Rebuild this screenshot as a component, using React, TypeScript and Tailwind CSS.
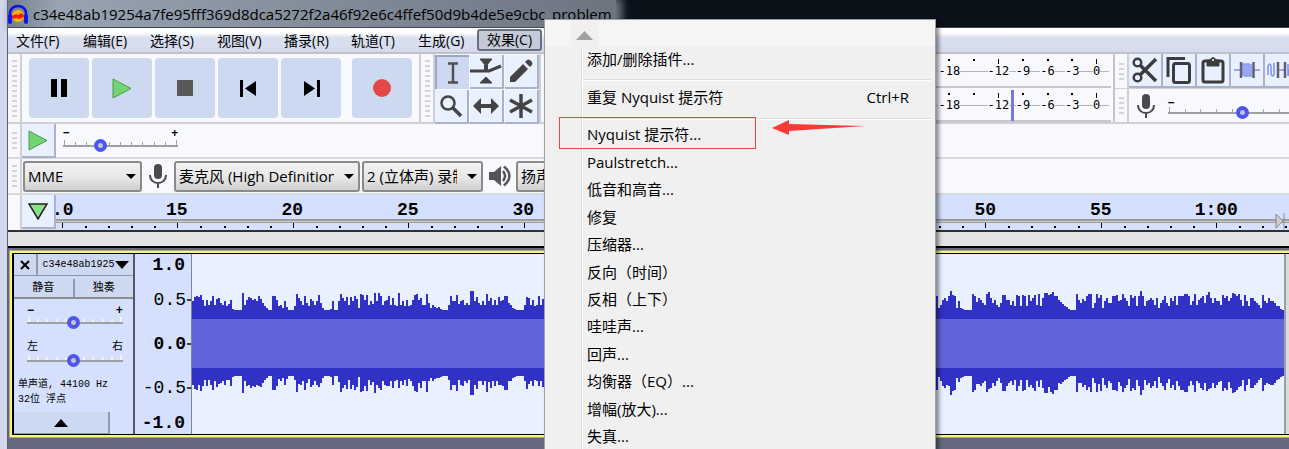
import React from "react";

const UI = "font-['Open_Sans','Noto_Sans_CJK_SC',sans-serif]";
const MONO = "font-['Liberation_Mono','Noto_Sans_CJK_SC',monospace]";

const menus = ["文件(F)", "编辑(E)", "选择(S)", "视图(V)", "播录(R)", "轨道(T)", "生成(G)"];
const effects = [
  "Nyquist 提示符...",
  "Paulstretch...",
  "低音和高音...",
  "修复",
  "压缩器...",
  "反向（时间）",
  "反相（上下）",
  "哇哇声...",
  "回声...",
  "均衡器（EQ）...",
  "增幅(放大)...",
  "失真...",
];

// Peak heights of the recording, one base-36 digit for every two pixels.
const opening =
  "9dedfa4a59e5bc75946a10000h5adcab9eb74200eea452930004gc95e74b959f7200019009gc9d5d9eb2gfaf596h9he59ae5c54h594a45afgac55g7253231000" +
  "5e99f69a575jj9d7595g9c5a5d9aee752100005dc5a45e5b";
const closing =
  "e25ac9ejfe29210000ge8ca75gic7a537ffaa594fe4fe4f9cf5g4chhfgieea86431000ga7b9egg27gcf29c77eef9agc94fce4eje49aca5c27ae74c9e5eeegge59g5ace7fic7c995fce9chgega4f94cc9752f97c9974410";
const peaks = (opening + opening + opening.slice(0, 20) + closing).split("").map((c) => parseInt(c, 36));

const wave = (() => {
  const n = peaks.length;
  const w = 1092 / n;
  const top: string[] = [];
  const bottom: string[] = [];
  peaks.forEach((p, i) => {
    const x = (i * w).toFixed(1);
    const x2 = ((i + 1) * w).toFixed(1);
    top.push(`L${x} ${56 - p} L${x2} ${56 - p}`);
    const q = i % 5 === 3 ? Math.round(p * 0.7) : p;
    bottom.unshift(`L${x2} ${122 + q} L${x} ${122 + q}`);
  });
  return `M0 56 ${top.join(" ")} L1092 56 L1092 122 ${bottom.join(" ")} Z`;
})();

function Grip({ rows }: { rows: number }) {
  return (
    <div className="flex w-[14px] shrink-0 flex-col items-center justify-center gap-[3px] border-r-2 border-[#d0d0d4] bg-[#f8f9ff]">
      {Array.from({ length: rows }, (_, i) => (
        <span key={i} className="h-[2px] w-[5px] bg-[#d4d4d8]" />
      ))}
    </div>
  );
}

function Transport({ label, children }: { label: string; children: React.ReactNode }) {
  return (
    <button aria-label={label} className="flex size-[60px] shrink-0 items-center justify-center rounded-[4px] bg-[#cdd9f1]">
      {children}
    </button>
  );
}

function Tool({ label, active, children }: { label: string; active?: boolean; children: React.ReactNode }) {
  return (
    <button
      aria-label={label}
      className={
        active
          ? "flex size-[34px] shrink-0 items-center justify-center border-t-2 border-l-2 border-[#9aa6c4] bg-[#cdd9f1]"
          : "flex size-[34px] shrink-0 items-center justify-center border-r-2 border-b-2 border-[#a9b2ca] bg-[#e9f0ff]"
      }
    >
      {children}
    </button>
  );
}

function Mic() {
  return (
    <svg width="20" height="26" viewBox="0 0 20 26" className="shrink-0">
      <rect x="6" y="1" width="8" height="15" rx="4" fill="#4a4a4a" />
      <path d="M2 12c0 5 3.500 8 8 8s8-3 8-8M10 20v5" fill="none" stroke="#4a4a4a" strokeWidth="2" />
    </svg>
  );
}

function Slider({ label, value, ticks, light }: { label: string; value: number; ticks: number; light?: boolean }) {
  return (
    <div className="flex w-full flex-col">
      <div className="flex h-[5px] items-end justify-between px-px">
        {Array.from({ length: ticks }, (_, i) => (
          <span
            key={i}
            className={`${light ? "w-[2px] bg-[#f4f4f0]" : "w-px bg-[#a4a4a4]"} ${i === 0 || i === ticks - 1 ? "h-[5px]" : "h-[3px]"}`}
          />
        ))}
      </div>
      <input
        type="range"
        aria-label={label}
        defaultValue={value}
        className="-my-[5px] block h-[12px] w-full appearance-none bg-transparent [&::-webkit-slider-runnable-track]:h-[2px] [&::-webkit-slider-runnable-track]:bg-[#a0a0a0] [&::-webkit-slider-thumb]:-mt-[6px] [&::-webkit-slider-thumb]:size-[13px] [&::-webkit-slider-thumb]:appearance-none [&::-webkit-slider-thumb]:rounded-full [&::-webkit-slider-thumb]:border-4 [&::-webkit-slider-thumb]:border-[#4c55ee] [&::-webkit-slider-thumb]:bg-[#c4c4cc]"
      />
    </div>
  );
}

function Picker({ label, value, width }: { label: string; value: string; width: string }) {
  return (
    <div className={`relative shrink-0 ${width}`}>
      <select
        aria-label={label}
        className="h-[31px] w-full appearance-none overflow-hidden rounded-[3px] border-2 border-[#8a8a8a] bg-linear-to-b from-[#f2f2f2] via-[#e8e8e8] to-[#d0d0d0] pr-6 pl-[3px] text-[15px] text-black"
      >
        <option>{value}</option>
      </select>
      <svg width="10" height="5" className="pointer-events-none absolute top-[13px] right-[6px]">
        <path d="M0 0H10L5 5Z" fill="#000" />
      </svg>
    </div>
  );
}

function Meter({ mark }: { mark?: boolean }) {
  return (
    <div className="relative flex flex-1 justify-end border-b-2 border-[#c8c8cc] pr-[2px]">
      <div className="grid h-full w-[172px] grid-cols-7 pt-[5px] font-['DejaVu_Sans_Mono',monospace] text-[12px] leading-[14px]">
        {["-18", "", "-12", "-9", "-6", "-3", "0"].map((t, i) => (
          <div key={i} className="flex flex-col items-center">
            <span className="flex h-[5px] items-start">
              <span className={i === 2 || i === 6 ? "h-[5px] w-px bg-black" : "h-[2px] w-[2px] bg-black"} />
            </span>
            <span className="flex h-[14px] w-full items-center justify-center">
              <span className="h-px flex-1 bg-[#b4b4b8]" />
              {t}
              <span className="h-px flex-1 bg-[#b4b4b8]" />
            </span>
          </div>
        ))}
      </div>
      {mark && <span className="absolute top-[2px] right-[97px] h-[31px] w-[3px] bg-[#7478ee]" />}
    </div>
  );
}

function MenuRow({ children, keys }: { children: React.ReactNode; keys?: string }) {
  return (
    <button role="menuitem" className="flex min-h-0 w-full flex-1 items-center justify-between pr-[26px] pl-[42px] text-left">
      <span>{children}</span>
      {keys && <span>{keys}</span>}
    </button>
  );
}

export default function App() {
  return (
    <div className={`relative flex h-screen overflow-hidden bg-[#d3d7ec] pl-[7px] text-black ${UI}`}>
      <main className="flex min-w-0 flex-1 flex-col border-l border-[#5a6070] bg-[#f8f9ff]">
        <header className="flex h-[27px] shrink-0 items-center bg-[#0b1119]">
          <div className="flex h-full items-center gap-[5px] bg-linear-to-r from-[#74808e] via-[#98a4b2] via-8% to-[#6c7480] pr-[4px] shadow-[4px_0_8px_2px_#6c7480]">
            <svg width="20" height="20" viewBox="0 0 20 20" className="shrink-0">
              <path d="M2 13V9a8 7 0 0 1 16 0v4" fill="none" stroke="#1010e0" strokeWidth="2.500" />
              <ellipse cx="10" cy="12" rx="6" ry="6" fill="#ffb400" />
              <path d="M3 12l3-1 2-1 2 1 3-2 4 3-3 2-3 1-3-1-3 1z" fill="#f02010" />
              <rect x="0" y="10" width="4" height="10" rx="2" fill="#1414f0" />
              <rect x="16" y="10" width="4" height="10" rx="2" fill="#1414f0" />
            </svg>
            <h1 className="text-[15px] leading-[24px] whitespace-nowrap">
              c34e48ab19254a7fe95fff369d8dca5272f2a46f92e6c4ffef50d9b4de5e9cbc_problem
            </h1>
          </div>
        </header>

        <nav className="flex h-[27px] shrink-0 items-stretch border-t border-b-2 border-t-[#404854] border-b-[#c0c2c8] bg-linear-to-b from-white from-20% via-[#dce1f1] via-40% to-[#d5daed] text-[14px]">
          {menus.map((m) => (
            <button key={m} className="w-[67px] pl-[8px] text-left whitespace-nowrap">
              {m}
            </button>
          ))}
          <button className="my-px w-[65px] rounded-[3px] border-2 border-[#687080] bg-[#c5cad8] text-center leading-[18px] whitespace-nowrap">
            效果(C)
          </button>
        </nav>

        <section className="flex h-[70px] shrink-0 border-b-2 border-[#cfd0d6]">
          <Grip rows={12} />
          <div className="flex shrink-0 gap-[3px] px-[7px] pt-[4px]">
            <Transport label="暂停">
              <svg width="16" height="18"><path d="M0 0H6V18H0zM10 0H16V18H10z" /></svg>
            </Transport>
            <Transport label="播放">
              <svg width="20" height="21"><path d="M1 1L19 10.500L1 20z" fill="#72d572" stroke="#4a9a4c" /></svg>
            </Transport>
            <Transport label="停止">
              <svg width="16" height="16"><path d="M0 0H16V16H0z" fill="#585858" /></svg>
            </Transport>
            <Transport label="跳至开头">
              <svg width="17" height="17"><path d="M0 0H3V17H0zM16 1V16L5 8.500z" /></svg>
            </Transport>
            <Transport label="跳至结尾">
              <svg width="17" height="17"><path d="M14 0H17V17H14zM1 1V16L12 8.500z" /></svg>
            </Transport>
            <span className="w-[5px]" />
            <Transport label="录制">
              <svg width="18" height="18"><circle cx="9" cy="9" r="9" fill="#e34848" /></svg>
            </Transport>
          </div>
          <div className="flex border-l-2 border-[#cfd0d6]">
            <Grip rows={12} />
          </div>
          <div className="grid shrink-0 grid-cols-3 content-start gap-px pt-px">
            <Tool label="选择工具" active>
              <svg width="12" height="22" viewBox="0 0 12 22"><path d="M1 1.500H11M1 20.500H11M6 1V21" fill="none" stroke="#505050" strokeWidth="2.500" /></svg>
            </Tool>
            <Tool label="包络工具">
              <svg width="32" height="28" viewBox="0 0 32 28">
                <path d="M10 2H22L16 9zM10 26H22L16 20z" fill="#444" stroke="#444" />
                <path d="M0 14H19L31 9" fill="none" stroke="#444" strokeWidth="3" />
                <path d="M14 8H18V14H14z" fill="#444" />
              </svg>
            </Tool>
            <Tool label="绘制工具">
              <svg width="24" height="24" viewBox="0 0 24 24"><path d="M1 23V18L14 5L19 10L6 23zM16 3L18 1Q19 0 21 1L23 3Q24 5 23 6L21 8z" fill="#444" /></svg>
            </Tool>
            <Tool label="缩放工具">
              <svg width="24" height="24" viewBox="0 0 24 24"><circle cx="9" cy="9" r="6.500" fill="none" stroke="#444" strokeWidth="2.500" /><path d="M14 14L22 22" stroke="#444" strokeWidth="3.500" /></svg>
            </Tool>
            <Tool label="时间移动工具">
              <svg width="26" height="16" viewBox="0 0 26 16"><path d="M0 8L8 0V6H18V0L26 8L18 16V10H8V16z" fill="#444" /></svg>
            </Tool>
            <Tool label="多功能工具">
              <svg width="26" height="26" viewBox="0 0 26 26"><path d="M13 1V25M2 7L24 19M24 7L2 19" stroke="#444" strokeWidth="3.500" /></svg>
            </Tool>
          </div>
          <div className="flex border-l-2 border-[#cfd0d6]">
            <Grip rows={12} />
          </div>
          <div className="flex flex-1 flex-col">
            <Meter />
            <Meter mark />
          </div>
          <div className="ml-[2px] flex w-[176px] shrink-0 flex-col overflow-hidden border-l-2 border-[#c4c4c8]">
            <div className="flex h-[35px] shrink-0 items-stretch border-b border-[#cfd0d6]">
              <Grip rows={4} />
              <Tool label="剪切">
                <svg width="26" height="26" viewBox="0 0 26 26" fill="none" stroke="#3c3c3c" strokeWidth="2.500">
                  <circle cx="5.500" cy="5.500" r="3.800" /><circle cx="5.500" cy="20.500" r="3.800" />
                  <path d="M8 8L24 24M8 18L24 2" strokeWidth="3.500" />
                </svg>
              </Tool>
              <Tool label="复制">
                <svg width="26" height="29" viewBox="0 0 26 29" fill="none" stroke="#3c3c3c" strokeWidth="3">
                  <rect x="7.500" y="7.500" width="16" height="19" rx="2" /><path d="M2 21V2.500H19" />
                </svg>
              </Tool>
              <Tool label="粘贴">
                <svg width="24" height="28" viewBox="0 0 24 28" fill="none" stroke="#3c3c3c">
                  <rect x="2" y="5" width="20" height="21" rx="2" strokeWidth="3" /><path d="M6 4H9Q12-1 15 4H18V10H6z" fill="#3c3c3c" strokeWidth="1" /><circle cx="12" cy="4" r="1" fill="#fff" stroke="none" />
                </svg>
              </Tool>
              <Tool label="修剪音频">
                <svg width="26" height="18" viewBox="0 0 26 18" fill="none" stroke="#7f8df0" strokeWidth="1.500">
                  <path d="M0 9H6M20 9H26M9 15V3H11V15H13V3H15V15H17V3" /><path d="M7 1V17M19.500 1V17" stroke="#606068" strokeWidth="2.500" />
                </svg>
              </Tool>
              <Tool label="静音音频">
                <svg width="28" height="18" viewBox="0 0 28 18" fill="none" stroke="#7f8df0" strokeWidth="1.500">
                  <path d="M1 14V5Q3 1 4 5V13Q6 17 7 13V2M12 9H17M21 3V15L24 3V15L27 3" /><path d="M11 1V17M18 1V17" stroke="#606068" strokeWidth="2.500" />
                </svg>
              </Tool>
            </div>
            <div className="flex flex-1 items-stretch">
              <Grip rows={4} />
              <div className="flex w-[160px] shrink-0 items-center gap-[12px] pl-[7px]">
                <Mic />
                <div className="w-[160px] shrink-0">
                  <div className="text-[12px] leading-[9px] font-bold">−</div>
                  <Slider label="录制音量" value={46} ticks={11} />
                </div>
              </div>
            </div>
          </div>
        </section>

        <section className="flex h-[35px] shrink-0 border-b-2 border-[#d8d9df]">
          <Grip rows={4} />
          <Tool label="以指定速度播放">
            <svg width="20" height="21"><path d="M1 1L19 10.500L1 20z" fill="#72d572" stroke="#4a9a4c" /></svg>
          </Tool>
          <div className="ml-[7px] w-[115px] pt-[4px]">
            <div className="flex justify-between text-[12px] leading-[10px] font-bold">
              <span>−</span>
              <span>+</span>
            </div>
            <div className="pt-[2px]">
              <Slider label="播放速度" value={30} ticks={11} />
            </div>
          </div>
        </section>

        <section className="flex h-[36px] shrink-0 items-stretch overflow-hidden border-b-2 border-[#d8d9df]">
          <Grip rows={5} />
          <div className="flex items-center gap-[2px] pl-px">
            <Picker label="音频主机" value="MME" width="w-[119px]" />
            <span className="flex w-[28px] justify-center"><Mic /></span>
            <Picker label="录制设备" value="麦克风 (High Definition Audio)" width="w-[186px]" />
            <Picker label="录制声道" value="2 (立体声) 录制声道" width="w-[121px]" />
            <span className="flex w-[29px] justify-center">
              <svg width="24" height="22" viewBox="0 0 24 22">
                <path d="M1 7H6L13 1V21L6 15H1z" fill="#555" />
                <path d="M15 6Q19 11 15 16M16 1.500Q27 11 16 20.500" fill="none" stroke="#555" strokeWidth="2.500" />
              </svg>
            </span>
            <Picker label="播放设备" value="扬声器" width="w-[186px]" />
          </div>
        </section>

        <section className="flex h-[37px] shrink-0 border-b-2 border-[#303030] bg-[#d4e0fe]">
          <div className="w-[14px] shrink-0 border-r-2 border-[#d0d0d4] bg-[#f8f9ff]" />
          <Tool label="固定播放头">
            <svg width="20" height="17"><path d="M1 1H19L10 16z" fill="#8ae08a" stroke="#222" strokeWidth="1.500" /></svg>
          </Tool>
          <div className={`flex min-w-0 flex-1 flex-col overflow-hidden text-[18px] font-bold ${MONO}`}>
            <div className="flex h-[24px] pt-[3px] pr-[15px] leading-[24px]">
              <span className="-ml-[4px] w-[67px] shrink-0">.0</span>
              {["15", "20", "25", "30", "35", "40", "45", "50", "55", "1:00"].map((t) => (
                <span key={t} className="flex-1 text-center">
                  {t}
                </span>
              ))}
            </div>
            <div className="relative h-[4px] shrink-0 border-t-2 border-b border-[#9c9c9c] bg-[#d0d0d0]">
              <svg width="10" height="16" className="absolute -top-[8px] right-[4px]">
                <path d="M1 1L8 8L1 15zM9 0V16" fill="#ccc" stroke="#888" />
              </svg>
            </div>
            <svg className="block h-[7px] w-full" height="7">
              {Array.from({ length: 54 }, (_, i) => (
                <rect key={i} x={Math.round(6 + i * 23.08)} y={i % 5 ? 3 : 0} width={i % 5 ? 2 : 1} height={i % 5 ? 2 : 5} />
              ))}
            </svg>
          </div>
        </section>

        <section className="flex flex-1 flex-col bg-[#65687f]">
          <div className="h-[16px] shrink-0 border-b-2 border-black bg-[#e3e3e3]" />
          <div className="mt-[2px] ml-px border-y border-l border-[#a9a878] bg-[#f8f57c] py-[2px] pl-[2px]">
            <div className="flex h-[182px] border-y border-l-2 border-black bg-[#d4e0fe]">
              <aside className={`flex w-[121px] shrink-0 flex-col border-r-2 border-[#55585f] ${MONO}`}>
                <div className="flex h-[22px] border-b border-[#8a93aa] bg-[#cdd9f1]">
                  <button aria-label="关闭" className="flex w-[24px] items-center justify-center border-r-2 border-[#9099b0]">
                    <svg width="10" height="10"><path d="M1 1L9 9M9 1L1 9" stroke="#000" strokeWidth="2" /></svg>
                  </button>
                  <button className="flex flex-1 items-center justify-center text-[10px]">
                    c34e48ab1925
                    <svg width="14" height="8"><path d="M0 0H14L7 8z" /></svg>
                  </button>
                </div>
                <div className="flex h-[23px] border-b-2 border-[#8a8d94] bg-[#cdd9f1] pt-[3px] text-[11px]">
                  <button className="flex-1 border-r-2 border-[#9099b0]">静音</button>
                  <button className="flex-1">独奏</button>
                </div>
                <div className="mr-[10px] ml-[13px] pt-[6px]">
                  <div className="flex justify-between text-[12px] leading-[12px] font-bold">
                    <span>−</span>
                    <span>+</span>
                  </div>
                  <Slider label="增益" value={48} ticks={11} light />
                </div>
                <div className="mr-[10px] ml-[13px] pt-[15px]">
                  <div className="flex justify-between text-[11px] leading-[16px]">
                    <span>左</span>
                    <span>右</span>
                  </div>
                  <Slider label="声像" value={48} ticks={11} light />
                </div>
                <p className="mt-[15px] pl-[4px] text-[10px] leading-[15px] whitespace-nowrap">
                  单声道, 44100 Hz
                  <br />
                  32位 浮点
                </p>
                <button aria-label="折叠" className="mt-auto flex h-[22px] w-[96px] items-center justify-center border-r-2 border-b border-[#9099b0] bg-[#cdd9f1]">
                  <svg width="14" height="8"><path d="M0 8H14L7 0z" /></svg>
                </button>
              </aside>
              <div className={`flex w-[57px] shrink-0 flex-col justify-between border-r border-[#80848c] text-right text-[18px] leading-[22px] ${MONO}`}>
                <b className="pr-[6px]">1.0</b>
                <div className="flex flex-col gap-[22px]">
                  {["0.5", "0.0", "-0.5"].map((t) => (
                    <span key={t} className={`flex items-center justify-end ${t === "0.0" ? "font-bold" : ""}`}>
                      {t}
                      <span className="ml-px h-[2px] w-[4px] bg-[#404040]" />
                    </span>
                  ))}
                </div>
                <b className="pr-[6px]">-1.0</b>
              </div>
              <svg className="h-full min-w-0 flex-1 bg-[#e9f1ff]" viewBox="0 0 1092 180" preserveAspectRatio="none">
                <path d={wave} fill="#3131c6" />
                <rect y="65" width="1092" height="49" fill="#6464da" />
              </svg>
              <div className="w-[5px] shrink-0 border-l-2 border-[#9a9ea6] bg-[#dcdcdc]" />
            </div>
          </div>
        </section>
      </main>

      <div
        role="menu"
        className="absolute top-[19px] -bottom-[3px] left-[544px] flex w-[392px] flex-col overflow-hidden border border-[#a0a0a0] bg-[#f0f0f0] text-[15px] shadow-[3px_3px_4px_rgba(0,0,0,0.45)]"
      >
        <div className="flex h-[26px] shrink-0 bg-[#f5f5f5] pl-[26px]">
          <button aria-label="向上滚动" className="flex w-[27px] items-center justify-center bg-[#f0f0f0] pt-[5px]">
            <svg width="17" height="9"><path d="M0 9H17L8.500 0z" fill="#a0a0a0" /></svg>
          </button>
        </div>
        <div className="flex min-h-0 flex-1 flex-col">
          <div className="flex h-[33px] shrink-0 pb-[6px]">
            <MenuRow>添加/删除插件...</MenuRow>
          </div>
          <hr className="mr-[4px] ml-[37px] h-[2px] shrink-0 border-t border-b border-t-[#dedede] border-b-white" />
          <div className="flex h-[37px] shrink-0 pb-[4px]">
            <MenuRow keys="Ctrl+R">重复 Nyquist 提示符</MenuRow>
          </div>
          <hr className="mr-[4px] ml-[37px] h-[2px] shrink-0 border-t border-b border-t-[#dedede] border-b-white" />
          <div className="flex h-[330px] shrink-0 flex-col pt-px">
            {effects.map((e) => (
              <MenuRow key={e}>{e}</MenuRow>
            ))}
          </div>
        </div>
        <span className="absolute top-[26px] bottom-0 left-[36px] w-[2px] border-r border-l border-r-white border-l-[#e0e0e0]" />
        <span className="absolute top-[97px] left-[14px] h-[32px] w-[197px] border border-[#f34040]" />
        <svg width="94" height="18" className="absolute top-[99px] left-[227px]">
          <path d="M0 9L17 1V5L93 7L17 12V16z" fill="#fb3a38" />
        </svg>
      </div>
    </div>
  );
}
